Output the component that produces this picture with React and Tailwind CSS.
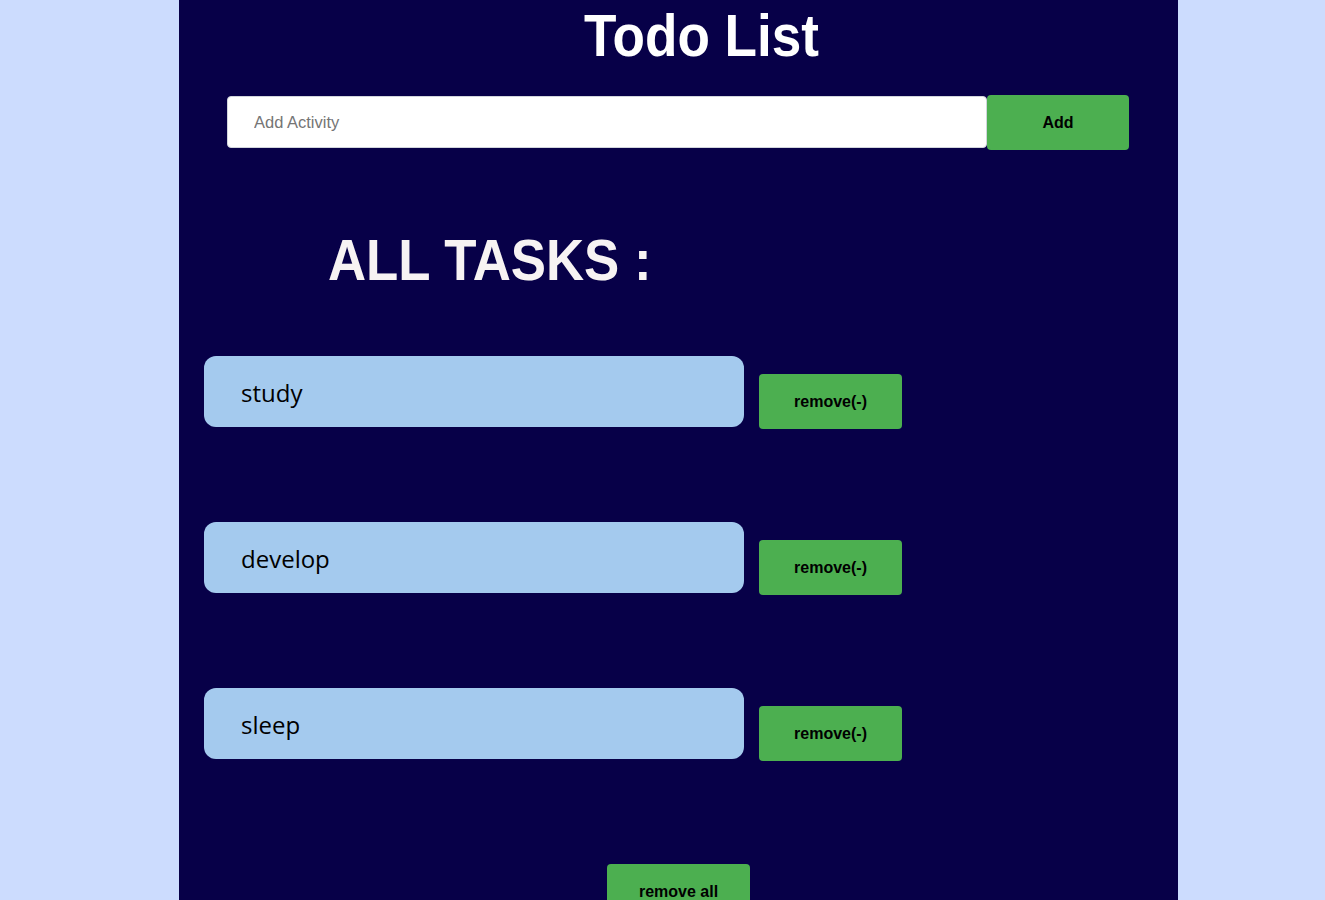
import React, { useState } from 'react';

const App = () => {
  const [tasks, setTasks] = useState(['study', 'develop', 'sleep']);
  const [text, setText] = useState('');

  const addTask = () => {
    if (!text.trim()) return;
    setTasks([...tasks, text]);
    setText('');
  };

  return (
    <div className="min-h-[900px] bg-[#ccdcfe] font-['Liberation_Sans',Arial,sans-serif]">
      <div className="ml-[179px] w-[999px] min-h-[900px] bg-[#070048] overflow-hidden">
        <div className="flex justify-center pt-[7px] pl-[47px]">
          <h1 className="inline-block scale-x-[0.9] text-[59px] font-bold text-white leading-none">
            Todo List
          </h1>
        </div>

        <div className="flex items-start ml-[48px] mt-[29px]">
          <input
            type="text"
            placeholder="Add Activity"
            value={text}
            onChange={(e) => setText(e.target.value)}
            className="mt-[1px] w-[760px] h-[52px] bg-white rounded-[4px] border border-gray-300 pl-[26px] text-[16.5px] text-gray-800 placeholder:text-[#757575] outline-none"
          />
          <button
            onClick={addTask}
            className="w-[142px] h-[55px] bg-[#4caf50] rounded-[4px] text-[16px] font-bold text-black"
          >
            Add
          </button>
        </div>

        <h2 className="inline-block origin-left scale-x-[0.91] text-[58px] font-bold text-[#f7f3f3] leading-none mt-[81px] ml-[149px]">
          ALL TASKS :
        </h2>

        <div className="mt-[67px] ml-[25px] flex flex-col gap-[93px]">
          {tasks.map((t, i) => (
            <div key={i} className="flex items-start gap-[15px]">
              <div className="w-[540px] h-[71px] bg-[#a4caee] rounded-[12px] flex items-center pl-[37px] pt-[3px] text-[24px] text-black font-['Open_Sans','Noto_Sans',sans-serif]">
                {t}
              </div>
              <button
                onClick={() => setTasks(tasks.filter((_, j) => j !== i))}
                className="mt-[18px] w-[143px] h-[55px] bg-[#4caf50] rounded-[4px] text-[16px] font-bold text-black"
              >
                remove(-)
              </button>
            </div>
          ))}
        </div>

        <div className="flex justify-center mt-[103px] pb-[20px]">
          <button
            onClick={() => setTasks([])}
            className="w-[143px] h-[55px] bg-[#4caf50] rounded-[4px] text-[16px] font-bold text-black"
          >
            remove all
          </button>
        </div>
      </div>
    </div>
  );
};

export default App;
